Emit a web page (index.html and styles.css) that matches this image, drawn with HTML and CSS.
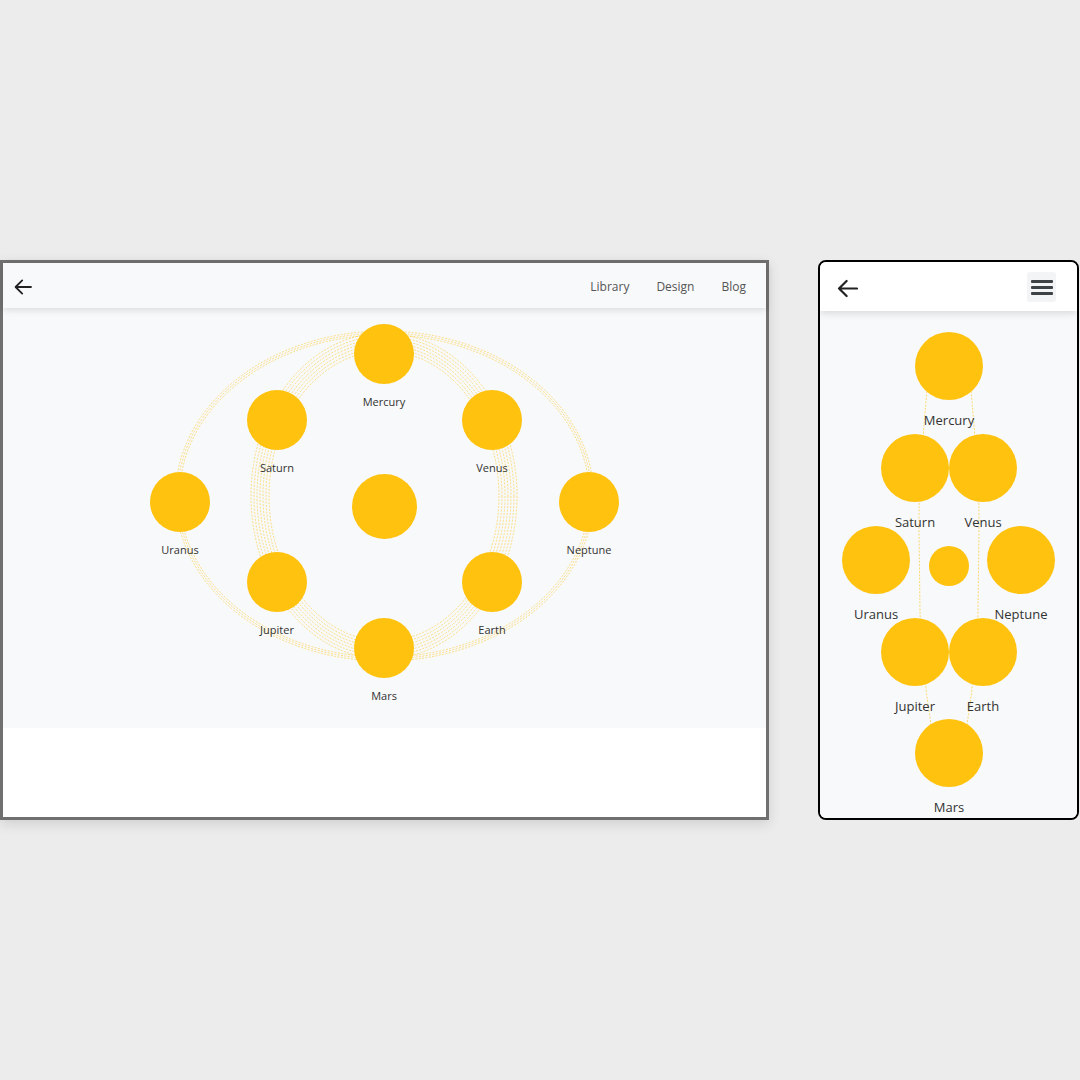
FILE: index.html
```html
<!DOCTYPE html>
<html lang="en">
<head>
<meta charset="utf-8">
<title>Solar system</title>
<link rel="stylesheet" href="styles.css">
</head>
<body>
<div class="stage">
  <div class="desktop">
    <header class="d-header">
      <svg class="d-back" width="18" height="18" viewBox="0 0 18 18"><path d="M17 9 H1.8 M8.2 2.4 L1.6 9 L8.2 15.6" fill="none" stroke="#222" stroke-width="1.8" stroke-linecap="round" stroke-linejoin="round"/></svg>
      <nav class="d-nav">
        <span class="d-link">Library</span>
        <span class="d-link">Design</span>
        <span class="d-link">Blog</span>
      </nav>
    </header>
    <main class="d-canvas">
      <svg class="orbits" width="763" height="420" viewBox="0 0 763 420">
        <g fill="none" stroke="#ffc107" stroke-width="0.6" stroke-dasharray="2 1.4" opacity="0.8">
          <ellipse cx="381.5" cy="188" rx="205" ry="161"/>
          <ellipse cx="381.5" cy="188" rx="207" ry="163"/>
          <ellipse cx="381.5" cy="188" rx="209" ry="165"/>
          <ellipse cx="381" cy="188" rx="115" ry="145"/>
          <ellipse cx="381" cy="188" rx="118" ry="148"/>
          <ellipse cx="381" cy="188" rx="121" ry="151"/>
          <ellipse cx="381" cy="188" rx="124" ry="154"/>
          <ellipse cx="381" cy="188" rx="127" ry="157"/>
          <ellipse cx="381" cy="188" rx="130" ry="160"/>
          <ellipse cx="381" cy="188" rx="133" ry="163"/>
        </g>
      </svg>
      <div class="d-sun"></div>
      <div class="d-node dp-mercury"><div class="d-planet"></div><span class="d-label">Mercury</span></div>
      <div class="d-node dp-saturn"><div class="d-planet"></div><span class="d-label">Saturn</span></div>
      <div class="d-node dp-venus"><div class="d-planet"></div><span class="d-label">Venus</span></div>
      <div class="d-node dp-uranus"><div class="d-planet"></div><span class="d-label">Uranus</span></div>
      <div class="d-node dp-neptune"><div class="d-planet"></div><span class="d-label">Neptune</span></div>
      <div class="d-node dp-jupiter"><div class="d-planet"></div><span class="d-label">Jupiter</span></div>
      <div class="d-node dp-earth"><div class="d-planet"></div><span class="d-label">Earth</span></div>
      <div class="d-node dp-mars"><div class="d-planet"></div><span class="d-label">Mars</span></div>
    </main>
    <div class="d-footer"></div>
  </div>

  <div class="mobile">
    <header class="m-header">
      <svg class="m-back" width="21" height="19" viewBox="0 0 21 19"><path d="M20 9.5 H2 M9.6 2 L2 9.5 L9.6 17" fill="none" stroke="#222" stroke-width="2.2" stroke-linecap="round" stroke-linejoin="round"/></svg>
      <button class="m-burger" type="button" aria-label="Menu">
        <span class="bar"></span><span class="bar"></span><span class="bar"></span>
      </button>
    </header>
    <main class="m-canvas">
      <svg class="m-lines" width="257" height="506" viewBox="0 0 257 506">
        <g fill="none" stroke="#ffc107" stroke-width="0.7" stroke-dasharray="2 1.4" opacity="0.8">
          <path d="M107 80 C105 100 104 115 102 140 C100 165 99 180 99 220 L100 300 C101 330 104 355 106 378 C108 395 110 405 111 414"/>
          <path d="M151 80 C153 100 154 115 156 140 C158 165 159 180 159 220 L158 300 C157 330 154 355 152 378 C150 395 148 405 147 414"/>
        </g>
      </svg>
      <div class="m-sun"></div>
      <div class="m-node mp-mercury"><div class="m-planet"></div><span class="m-label">Mercury</span></div>
      <div class="m-node mp-saturn"><div class="m-planet"></div><span class="m-label">Saturn</span></div>
      <div class="m-node mp-venus"><div class="m-planet"></div><span class="m-label">Venus</span></div>
      <div class="m-node mp-uranus"><div class="m-planet"></div><span class="m-label">Uranus</span></div>
      <div class="m-node mp-neptune"><div class="m-planet"></div><span class="m-label">Neptune</span></div>
      <div class="m-node mp-jupiter"><div class="m-planet"></div><span class="m-label">Jupiter</span></div>
      <div class="m-node mp-earth"><div class="m-planet"></div><span class="m-label">Earth</span></div>
      <div class="m-node mp-mars"><div class="m-planet"></div><span class="m-label">Mars</span></div>
    </main>
  </div>
</div>
</body>
</html>
```

FILE: styles.css
```css
html, body {
  margin: 0;
  padding: 0;
}
body {
  background: #ececec;
  font-family: "Open Sans", "Noto Sans", "Liberation Sans", sans-serif;
  width: 1080px;
  height: 1080px;
  overflow: hidden;
}
.stage {
  display: flex;
  align-items: flex-start;
  gap: 49px;
  padding-top: 260px;
}

/* ---------- desktop ---------- */
.desktop {
  width: 769px;
  height: 560px;
  box-sizing: border-box;
  border: 3px solid #707070;
  background: #fff;
  box-shadow: 0 4px 12px rgba(0, 0, 0, 0.12);
  display: flex;
  flex-direction: column;
}
.d-header {
  height: 45px;
  flex: none;
  background: #f8f9fa;
  display: flex;
  align-items: center;
  justify-content: space-between;
  padding: 0 20px 0 11px;
  position: relative;
  z-index: 2;
  box-shadow: 0 2px 7px rgba(0, 0, 0, 0.13);
}
.d-back {
  display: block;
  margin-top: 2px;
}
.d-nav {
  display: flex;
  gap: 27px;
  align-items: center;
  padding-top: 2px;
}
.d-link {
  font-size: 12px;
  color: #555;
  line-height: 16px;
}
.d-canvas {
  position: relative;
  height: 420px;
  flex: none;
  background: #f8f9fa;
}
.d-footer {
  flex: 1;
  background: #fff;
}
.orbits {
  position: absolute;
  left: 0;
  top: 0;
}
.d-sun {
  position: absolute;
  left: 349px;
  top: 166px;
  width: 65px;
  height: 65px;
  border-radius: 50%;
  background: #ffc20e;
}
.d-node {
  position: absolute;
  width: 80px;
  display: flex;
  flex-direction: column;
  align-items: center;
}
.d-planet {
  width: 60px;
  height: 60px;
  border-radius: 50%;
  background: #ffc20e;
}
.d-label {
  margin-top: 11px;
  font-size: 11px;
  line-height: 14px;
  color: #333;
  white-space: nowrap;
}
.dp-mercury { left: 341px; top: 16px; }
.dp-saturn  { left: 234px; top: 82px; }
.dp-venus   { left: 449px; top: 82px; }
.dp-uranus  { left: 137px; top: 164px; }
.dp-neptune { left: 546px; top: 164px; }
.dp-jupiter { left: 234px; top: 244px; }
.dp-earth   { left: 449px; top: 244px; }
.dp-mars    { left: 341px; top: 310px; }

/* ---------- mobile ---------- */
.mobile {
  width: 261px;
  height: 560px;
  box-sizing: border-box;
  border: 2px solid #000;
  border-radius: 8px;
  overflow: hidden;
  background: #f8f9fa;
  display: flex;
  flex-direction: column;
}
.m-header {
  height: 49px;
  flex: none;
  background: #fff;
  display: flex;
  align-items: center;
  justify-content: space-between;
  padding: 0 21px 0 17px;
  position: relative;
  z-index: 2;
  box-shadow: 0 2px 8px rgba(0, 0, 0, 0.14);
}
.m-back {
  display: block;
  margin-top: 4px;
}
.m-burger {
  width: 29px;
  height: 30px;
  margin-top: 1px;
  border: none;
  border-radius: 3px;
  background: #f3f4f6;
  padding: 0;
  display: flex;
  flex-direction: column;
  align-items: center;
  justify-content: center;
  gap: 3px;
}
.bar {
  display: block;
  width: 22px;
  height: 3px;
  border-radius: 1px;
  background: #3d4247;
}
.m-canvas {
  position: relative;
  flex: 1;
  background: #f8f9fa;
}
.m-lines {
  position: absolute;
  left: 0;
  top: 0;
}
.m-sun {
  position: absolute;
  left: 109px;
  top: 235px;
  width: 40px;
  height: 40px;
  border-radius: 50%;
  background: #ffc20e;
}
.m-node {
  position: absolute;
  width: 80px;
  display: flex;
  flex-direction: column;
  align-items: center;
}
.m-planet {
  width: 68px;
  height: 68px;
  border-radius: 50%;
  background: #ffc20e;
}
.m-label {
  margin-top: 12px;
  font-size: 13px;
  line-height: 17px;
  color: #333;
  white-space: nowrap;
}
.mp-mercury { left: 89px;  top: 21px; }
.mp-saturn  { left: 55px;  top: 123px; }
.mp-venus   { left: 123px; top: 123px; }
.mp-uranus  { left: 16px;  top: 215px; }
.mp-neptune { left: 161px; top: 215px; }
.mp-jupiter { left: 55px;  top: 307px; }
.mp-earth   { left: 123px; top: 307px; }
.mp-mars    { left: 89px;  top: 408px; }
```
